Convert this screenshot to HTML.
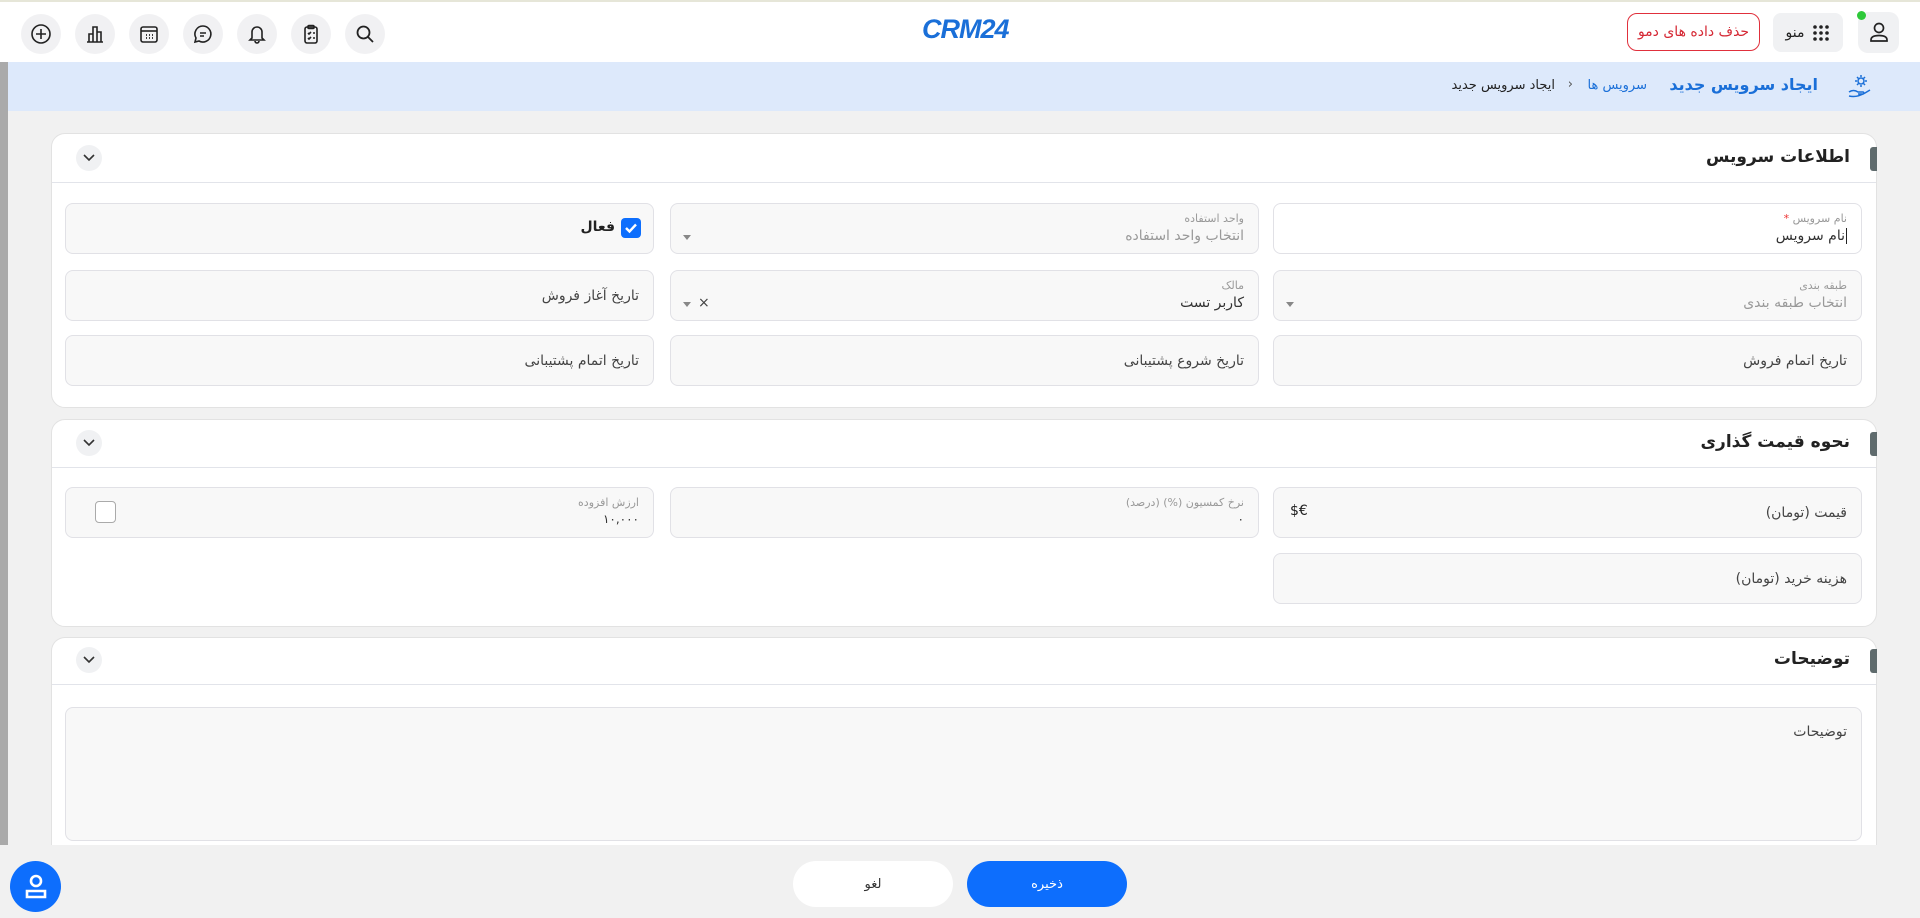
<!DOCTYPE html>
<html><head><meta charset="utf-8">
<style>
*{box-sizing:border-box;margin:0;padding:0}
body{width:1920px;height:918px;overflow:hidden;background:#f1f1f1;font-family:"DejaVu Sans","Liberation Sans","Noto Sans CJK SC",sans-serif;color:#333;position:relative}
.a{position:absolute}
.top{left:0;top:0;width:1920px;height:62px;background:#fff;border-top:2px solid #e6e6d8}
.ic{width:40px;height:40px;border-radius:50%;background:#f1f1f3;top:12px;display:flex;align-items:center;justify-content:center}
.crumb{left:8px;top:62px;width:1912px;height:49px;background:#dde9fb}
.lstrip{left:0;top:62px;width:8px;height:783px;background:#aaa}
.card{background:#fff;border:1px solid #e2e2e2;border-radius:14px;left:51px;width:1826px}
.hd{position:absolute;left:0;right:0;top:0;border-bottom:1px solid #e2e4ea}
.hd .t{position:absolute;right:26px;font-size:17px;font-weight:bold;color:#222;direction:rtl}
.hd .bar{position:absolute;right:-1px;width:7px;height:24px;background:#5f6b6d;border-radius:3px 0 0 3px}
.chev{position:absolute;left:24px;width:26px;height:26px;border-radius:50%;background:#f0f1f3;display:flex;align-items:center;justify-content:center}
.f{position:absolute;background:#f8f8f8;border:1px solid #e1e1e6;border-radius:8px;direction:rtl}
.lbl{position:absolute;right:14px;top:8px;font-size:11px;color:#999}
.val{position:absolute;right:14px;top:24px;font-size:14px;color:#333}
.ph{position:absolute;right:14px;font-size:14px;color:#444;top:50%;transform:translateY(-50%)}
.tri{position:absolute;left:12px;width:0;height:0;border-left:4px solid transparent;border-right:4px solid transparent;border-top:5px solid #888}
</style></head><body>
<div class="a top">
 <div class="a ic" style="left:21px"><svg width="22" height="22" viewBox="0 0 22 22" fill="none" stroke="#222" stroke-width="1.6"><circle cx="11" cy="11" r="9"/><path d="M11 6v10M6 11h10"/></svg></div>
 <div class="a ic" style="left:75px"><svg width="22" height="22" viewBox="0 0 22 22" fill="none" stroke="#222" stroke-width="1.6"><path d="M3 19h16M5 19v-8h4v8M9 19V4h4v15M13 19V9h4v10"/></svg></div>
 <div class="a ic" style="left:129px"><svg width="22" height="22" viewBox="0 0 22 22" fill="none" stroke="#222" stroke-width="1.6"><rect x="3" y="4" width="16" height="15" rx="2"/><path d="M3 8h16"/><path d="M8 12h1M11 12h1M14 12h1M8 15h1M11 15h1M14 15h1" stroke-width="1.8"/></svg></div>
 <div class="a ic" style="left:183px"><svg width="22" height="22" viewBox="0 0 22 22" fill="none" stroke="#222" stroke-width="1.6"><path d="M11 3a8 8 0 1 1-4 15l-4 1 1-4A8 8 0 0 1 11 3z"/><path d="M8 10h6M8 13h4"/></svg></div>
 <div class="a ic" style="left:237px"><svg width="22" height="22" viewBox="0 0 22 22" fill="none" stroke="#222" stroke-width="1.6"><path d="M6 15V9a5 5 0 0 1 10 0v6l2 2H4z"/><path d="M9 18a2 2 0 0 0 4 0"/></svg></div>
 <div class="a ic" style="left:291px"><svg width="22" height="22" viewBox="0 0 22 22" fill="none" stroke="#222" stroke-width="1.6"><rect x="5" y="4" width="12" height="16" rx="2"/><rect x="8" y="2.5" width="6" height="3" rx="1"/><path d="M8 10l1 1 2-2M8 15l1 1 2-2M13 10h2M13 15h2"/></svg></div>
 <div class="a ic" style="left:345px"><svg width="22" height="22" viewBox="0 0 22 22" fill="none" stroke="#222" stroke-width="1.8"><circle cx="9.5" cy="9.5" r="6"/><path d="M14 14l5 5"/></svg></div>
 <div class="a" style="left:922px;top:12px;font-family:'Liberation Sans',sans-serif;font-weight:bold;font-style:italic;font-size:27px;color:#1a6fd8;letter-spacing:-1px">CRM24</div>
 <div class="a" style="left:1627px;top:11px;width:133px;height:38px;border:1px solid #e0303c;border-radius:10px;color:#d52834;font-size:14px;display:flex;align-items:center;justify-content:center;direction:rtl">حذف داده های دمو</div>
 <div class="a" style="left:1773px;top:11px;width:70px;height:39px;background:#f0f1f3;border-radius:8px;display:flex;align-items:center;justify-content:center;gap:8px;font-size:14px;color:#222"><span>منو</span><svg width="18" height="18" viewBox="0 0 18 18" fill="#222"><circle cx="3" cy="3" r="1.8"/><circle cx="9" cy="3" r="1.8"/><circle cx="15" cy="3" r="1.8"/><circle cx="3" cy="9" r="1.8"/><circle cx="9" cy="9" r="1.8"/><circle cx="15" cy="9" r="1.8"/><circle cx="3" cy="15" r="1.8"/><circle cx="9" cy="15" r="1.8"/><circle cx="15" cy="15" r="1.8"/></svg></div>
 <div class="a" style="left:1858px;top:10px;width:41px;height:41px;background:#f0f1f3;border-radius:10px;display:flex;align-items:center;justify-content:center"><svg width="22" height="24" viewBox="0 0 22 24" fill="none" stroke="#222" stroke-width="1.7"><circle cx="11" cy="7" r="4.5"/><path d="M3 19c0-3 3-4.5 8-4.5s8 1.5 8 4.5v1H3z"/></svg></div>
 <div class="a" style="left:1857px;top:9px;width:9px;height:9px;border-radius:50%;background:#2ec93a"></div>
</div>
<div class="a crumb">
 <svg class="a" style="left:1839px;top:11px" width="26" height="26" viewBox="0 0 26 26" fill="none" stroke="#1a6fd8" stroke-width="1.5"><circle cx="14" cy="8" r="3"/><path d="M14 2v2M14 12v2M8 8h2M18 8h2M10 4l1.5 1.5M18 4l-1.5 1.5M10 12l1.5-1.5M18 12l-1.5-1.5"/><path d="M2 19c3-2 6-2 9 0h5c1 0 1 2 0 2h-5M2 23c4 1 9 1 16-3l5-3"/></svg>
 <div class="a" style="right:102px;top:13px;font-size:16px;font-weight:bold;color:#1a6fd8;direction:rtl;white-space:nowrap">ایجاد سرویس جدید</div>
 <div class="a" style="right:273px;top:16px;font-size:13px;color:#1a6fd8;direction:rtl;white-space:nowrap">سرویس ها</div>
 <div class="a" style="right:347px;top:15px;font-size:13px;color:#555">›</div>
 <div class="a" style="right:365px;top:16px;font-size:13px;color:#222;direction:rtl;white-space:nowrap">ایجاد سرویس جدید</div>
</div>
<div class="a lstrip"></div>

<!-- card 1 -->
<div class="a card" style="top:133px;height:275px">
 <div class="hd" style="height:49px"><div class="bar" style="top:13px"></div><div class="t" style="top:13px">اطلاعات سرویس</div><div class="chev" style="top:11px"><svg width="12" height="8" viewBox="0 0 12 8" fill="none" stroke="#333" stroke-width="1.6"><path d="M1 1l5 5 5-5"/></svg></div></div>
</div>
<div class="f" style="left:1273px;top:203px;width:589px;height:51px;background:#fff"><div class="lbl">نام سرویس <span style="color:#e33">*</span></div><div class="val" style="border-right:1px solid #222;padding-right:1px">نام سرویس</div></div>
<div class="f" style="left:670px;top:203px;width:589px;height:51px"><div class="lbl">واحد استفاده</div><div class="val" style="color:#999">انتخاب واحد استفاده</div><div class="tri" style="top:31px"></div></div>
<div class="f" style="left:65px;top:203px;width:589px;height:51px"><div class="a" style="right:12px;top:14px;width:20px;height:20px;background:#0d6efd;border-radius:4px"><svg width="20" height="20" viewBox="0 0 20 20" fill="none" stroke="#fff" stroke-width="2.4"><path d="M5 10l3.5 3.5L15 6.5"/></svg></div><div class="a" style="right:38px;top:15px;font-size:14px;font-weight:bold;color:#222">فعال</div></div>
<div class="f" style="left:1273px;top:270px;width:589px;height:51px"><div class="lbl">طبقه بندی</div><div class="val" style="color:#999">انتخاب طبقه بندی</div><div class="tri" style="top:31px"></div></div>
<div class="f" style="left:670px;top:270px;width:589px;height:51px"><div class="lbl">مالک</div><div class="val">کاربر تست</div><div class="tri" style="top:31px"></div><div class="a" style="left:27px;top:24px;font-size:14px;color:#444">×</div></div>
<div class="f" style="left:65px;top:270px;width:589px;height:51px"><div class="ph">تاریخ آغاز فروش</div></div>
<div class="f" style="left:1273px;top:335px;width:589px;height:51px"><div class="ph">تاریخ اتمام فروش</div></div>
<div class="f" style="left:670px;top:335px;width:589px;height:51px"><div class="ph">تاریخ شروع پشتیبانی</div></div>
<div class="f" style="left:65px;top:335px;width:589px;height:51px"><div class="ph">تاریخ اتمام پشتیبانی</div></div>

<!-- card 2 -->
<div class="a card" style="top:419px;height:208px">
 <div class="hd" style="height:48px"><div class="bar" style="top:12px"></div><div class="t" style="top:12px">نحوه قیمت گذاری</div><div class="chev" style="top:10px"><svg width="12" height="8" viewBox="0 0 12 8" fill="none" stroke="#333" stroke-width="1.6"><path d="M1 1l5 5 5-5"/></svg></div></div>
</div>
<div class="f" style="left:1273px;top:487px;width:589px;height:51px"><div class="ph">قیمت (تومان)</div><div class="a" style="left:16px;top:15px;font-size:14px;color:#222;direction:ltr">$€</div></div>
<div class="f" style="left:670px;top:487px;width:589px;height:51px"><div class="lbl">نرخ کمسیون (%) (درصد)</div><div class="val" style="font-size:12px">۰</div></div>
<div class="f" style="left:65px;top:487px;width:589px;height:51px"><div class="lbl">ارزش افزوده</div><div class="val" style="font-size:12px">۱۰,۰۰۰</div><div class="a" style="left:29px;top:13px;width:21px;height:22px;border:1px solid #aaa;border-radius:4px;background:#fff"></div></div>
<div class="f" style="left:1273px;top:553px;width:589px;height:51px"><div class="ph">هزینه خرید (تومان)</div></div>

<!-- card 3 -->
<div class="a card" style="top:637px;height:230px;border-bottom:none;border-radius:14px 14px 0 0">
 <div class="hd" style="height:47px"><div class="bar" style="top:11px"></div><div class="t" style="top:11px">توضیحات</div><div class="chev" style="top:9px"><svg width="12" height="8" viewBox="0 0 12 8" fill="none" stroke="#333" stroke-width="1.6"><path d="M1 1l5 5 5-5"/></svg></div></div>
</div>
<div class="f" style="left:65px;top:707px;width:1797px;height:134px"><div class="a" style="right:14px;top:16px;font-size:14px;color:#444">توضیحات</div></div>

<!-- bottom -->
<div class="a" style="left:0;top:845px;width:1920px;height:73px;background:#f1f1f1"></div>
<div class="a" style="left:967px;top:861px;width:160px;height:46px;background:#0d6efd;border-radius:23px;color:#fff;font-size:13px;display:flex;align-items:center;justify-content:center">ذخیره</div>
<div class="a" style="left:793px;top:861px;width:160px;height:46px;background:#fff;border-radius:23px;color:#333;font-size:13px;display:flex;align-items:center;justify-content:center">لغو</div>
<div class="a" style="left:10px;top:861px;width:51px;height:51px;border-radius:50%;background:#0d6efd;display:flex;align-items:center;justify-content:center"><svg width="26" height="28" viewBox="0 0 26 28" fill="none" stroke="#fff" stroke-width="2.6"><circle cx="13" cy="8" r="5"/><path d="M4 18h18v6H4z"/></svg></div>
</body></html>
